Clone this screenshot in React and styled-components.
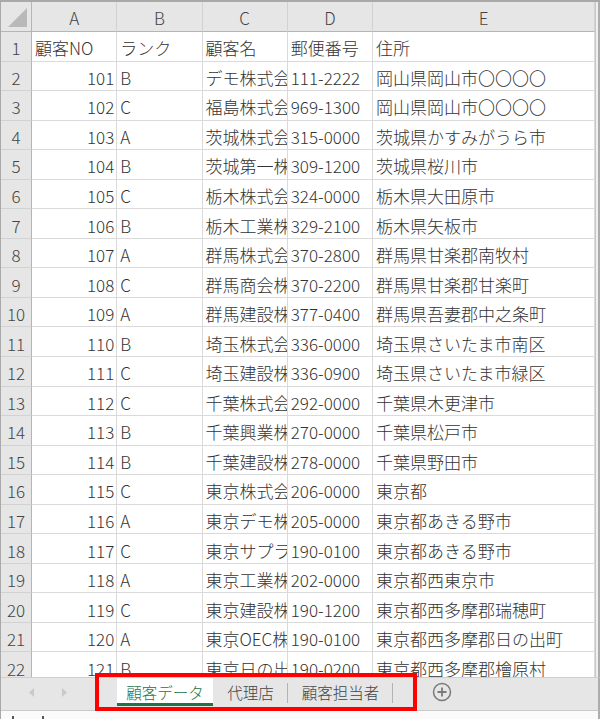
import React from 'react'
import styled, { createGlobalStyle } from 'styled-components'

const GlobalStyle = createGlobalStyle`
  html, body {
    margin: 0;
    padding: 0;
    background: #fff;
  }
  body {
    font-family: "Noto Sans CJK JP", "Noto Sans", sans-serif;
  }
`

const Frame = styled.div`
  position: relative;
  width: 600px;
  height: 719px;
  box-sizing: border-box;
  border-top: 2px solid #a9a9a9;
  border-left: 1px solid #a9a9a9;
  display: flex;
  flex-direction: column;
  overflow: hidden;
  background: #fff;
`

const Sheet = styled.div`
  flex: 0 0 675px;
  overflow: hidden;
  display: grid;
  grid-template-columns: 31px 85.25px 85.25px 85.25px 85.25px 222px 1fr;
  grid-template-rows: 30px;
  grid-auto-rows: 29.56px;
  font-size: 17px;
  font-weight: 300;
  color: #333;
`

const Corner = styled.div`
  position: relative;
  background: #e6e6e6;
  border-right: 1px solid #b5b5b5;
  border-bottom: 1px solid #b5b5b5;
  box-sizing: border-box;

  &::after {
    content: "";
    position: absolute;
    right: 4px;
    bottom: 4px;
    width: 0;
    height: 0;
    border-left: 19px solid transparent;
    border-bottom: 19px solid #b9b9b9;
  }
`

const ColHead = styled.div`
  background: #e6e6e6;
  border-right: 1px solid #d2d2d2;
  border-bottom: 1px solid #b5b5b5;
  box-sizing: border-box;
  display: flex;
  align-items: center;
  justify-content: center;
  color: #444;
  padding-top: 1px;
`

const RowHead = styled.div`
  background: #e6e6e6;
  border-right: 1px solid #b5b5b5;
  border-bottom: 1px solid #d2d2d2;
  box-sizing: border-box;
  display: flex;
  align-items: center;
  justify-content: center;
  color: #444;
  padding-top: 3px;
`

const Cell = styled.div`
  border-right: 1px solid #dadada;
  border-bottom: 1px solid #dadada;
  box-sizing: border-box;
  display: flex;
  align-items: center;
  justify-content: ${({ $num }) => ($num ? 'flex-end' : 'flex-start')};
  padding: 3px ${({ $num }) => ($num ? '2px' : '0')} 0 ${({ $num }) => ($num ? '0' : '3px')};
  white-space: nowrap;
  overflow: hidden;
  min-width: 0;
`

const Edge = styled.div`
  background: #efefef;
  border-left: 1px solid #c8c8c8;
  border-right: 2px solid #adadad;
  box-sizing: border-box;
`

const TabBar = styled.div`
  flex: 0 0 33px;
  background: #e6e6e6;
  display: flex;
  align-items: flex-start;
  border-top: 1px solid #cfcfcf;
  box-sizing: border-box;
  border-right: 2px solid #adadad;
`

const Nav = styled.div`
  width: 116px;
  height: 28px;
  display: flex;
  align-items: center;
  padding-left: 28px;
  gap: 26px;
  box-sizing: border-box;
`

const Tab = styled.div`
  position: relative;
  width: ${({ $w }) => $w}px;
  height: 28px;
  box-sizing: border-box;
  display: flex;
  align-items: center;
  justify-content: center;
  font-size: 15.5px;
  font-weight: 300;
  color: ${({ $active }) => ($active ? '#217346' : '#444')};
  background: ${({ $active }) => ($active ? '#fff' : 'transparent')};
  border-bottom: 3px solid ${({ $active }) => ($active ? '#217346' : 'transparent')};
  padding-top: 2px;

  &::after {
    content: "";
    display: ${({ $active }) => ($active ? 'none' : 'block')};
    position: absolute;
    right: 0;
    top: 5px;
    bottom: 0;
    width: 1px;
    background: #b3b3b3;
  }
`

const AddSheet = styled.div`
  margin-left: 39px;
  height: 28px;
  display: flex;
  align-items: center;
`

const Footer = styled.div`
  flex: 1;
  position: relative;
  background: #fafafa;
  border-top: 1px solid #c9c9c9;
  border-right: 2px solid #adadad;

  &::before,
  &::after {
    content: "";
    position: absolute;
    bottom: 0;
    width: 2px;
    height: 3px;
    background: #555;
  }
  &::before { left: 11px; }
  &::after { left: 41px; }
`

const Highlight = styled.div`
  position: absolute;
  left: 94px;
  top: 671px;
  width: 322px;
  height: 38px;
  box-sizing: border-box;
  border: 4px solid #f00;
  pointer-events: none;
`

const columns = ['A', 'B', 'C', 'D', 'E']

const rows = [
  ['顧客NO', 'ランク', '顧客名', '郵便番号', '住所'],
  [101, 'B', 'デモ株式会社', '111-2222', '岡山県岡山市〇〇〇〇'],
  [102, 'C', '福島株式会社', '969-1300', '岡山県岡山市〇〇〇〇'],
  [103, 'A', '茨城株式会社', '315-0000', '茨城県かすみがうら市'],
  [104, 'B', '茨城第一株式会社', '309-1200', '茨城県桜川市'],
  [105, 'C', '栃木株式会社', '324-0000', '栃木県大田原市'],
  [106, 'B', '栃木工業株式会社', '329-2100', '栃木県矢板市'],
  [107, 'A', '群馬株式会社', '370-2800', '群馬県甘楽郡南牧村'],
  [108, 'C', '群馬商会株式会社', '370-2200', '群馬県甘楽郡甘楽町'],
  [109, 'A', '群馬建設株式会社', '377-0400', '群馬県吾妻郡中之条町'],
  [110, 'B', '埼玉株式会社', '336-0000', '埼玉県さいたま市南区'],
  [111, 'C', '埼玉建設株式会社', '336-0900', '埼玉県さいたま市緑区'],
  [112, 'C', '千葉株式会社', '292-0000', '千葉県木更津市'],
  [113, 'B', '千葉興業株式会社', '270-0000', '千葉県松戸市'],
  [114, 'B', '千葉建設株式会社', '278-0000', '千葉県野田市'],
  [115, 'C', '東京株式会社', '206-0000', '東京都'],
  [116, 'A', '東京デモ株式会社', '205-0000', '東京都あきる野市'],
  [117, 'C', '東京サプライ株式会社', '190-0100', '東京都あきる野市'],
  [118, 'A', '東京工業株式会社', '202-0000', '東京都西東京市'],
  [119, 'C', '東京建設株式会社', '190-1200', '東京都西多摩郡瑞穂町'],
  [120, 'A', '東京OEC株式会社', '190-0100', '東京都西多摩郡日の出町'],
  [121, 'B', '東京日の出株式会社', '190-0200', '東京都西多摩郡檜原村'],
]

const tabs = [
  { name: '顧客データ', w: 96, active: true },
  { name: '代理店', w: 75 },
  { name: '顧客担当者', w: 105 },
]

const Arrow = ({ dir }) => (
  <svg width="6" height="9" viewBox="0 0 6 9">
    <path d={dir === 'left' ? 'M5 0 L0 4.5 L5 9 Z' : 'M1 0 L6 4.5 L1 9 Z'} fill="#c9c9c9" />
  </svg>
)

const PlusCircle = () => (
  <svg width="20" height="20" viewBox="0 0 20 20">
    <circle cx="10" cy="10" r="8.5" fill="none" stroke="#7a7a7a" strokeWidth="1.5" />
    <path d="M10 5.5 V14.5 M5.5 10 H14.5" stroke="#7a7a7a" strokeWidth="1.8" />
  </svg>
)

export default function App() {
  return (
    <>
      <GlobalStyle />
      <Frame>
        <Sheet>
          <Corner />
          {columns.map((c) => (
            <ColHead key={c}>{c}</ColHead>
          ))}
          <Edge />
          {rows.map((r, i) => (
            <React.Fragment key={i}>
              <RowHead>{i + 1}</RowHead>
              {r.map((v, j) => (
                <Cell key={j} $num={typeof v === 'number'}>
                  {v}
                </Cell>
              ))}
              <Edge />
            </React.Fragment>
          ))}
        </Sheet>
        <TabBar>
          <Nav>
            <Arrow dir="left" />
            <Arrow dir="right" />
          </Nav>
          {tabs.map((t) => (
            <Tab key={t.name} $w={t.w} $active={t.active}>
              {t.name}
            </Tab>
          ))}
          <AddSheet>
            <PlusCircle />
          </AddSheet>
        </TabBar>
        <Footer />
        <Highlight />
      </Frame>
    </>
  )
}
